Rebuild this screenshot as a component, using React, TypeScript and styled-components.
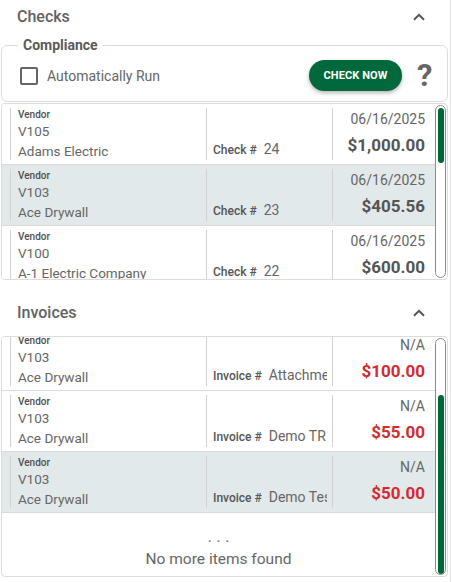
import React from "react";
import styled, { createGlobalStyle } from "styled-components";

const GlobalStyle = createGlobalStyle`
  html, body { margin: 0; padding: 0; background: #fff; }
  body { font-family: Roboto, "Noto Sans", "Liberation Sans", sans-serif; color: #666; }
  * { box-sizing: border-box; }
`;

const Page = styled.div`
  width: 451px;
  min-height: 582px;
  padding: 0 2px 0 1px;
  border-right: 1px solid #e2e2e2;
  display: flex;
  flex-direction: column;
`;

const SectionHeader = styled.div<{ $spaced?: boolean }>`
  height: 33px;
  margin-top: ${(p) => (p.$spaced ? "16px" : "0")};
  padding: 0 23px 0 16px;
  display: flex;
  align-items: center;
  justify-content: space-between;
`;

const Title = styled.h2`
  margin: 0;
  font-size: 16px;
  font-weight: 500;
  color: #626262;
  line-height: 20px;
`;

const Chevron = () => (
  <svg width="12" height="8" viewBox="0 0 12 8" aria-hidden="true">
    <path d="M1 6.8 L6 1.8 L11 6.8" fill="none" stroke="#555" strokeWidth="2" />
  </svg>
);

const Fieldset = styled.fieldset`
  margin: 4px 0 0 0;
  padding: 0 16px 3px 17px;
  border: 1px solid #dcdcdc;
  border-radius: 6px;
  min-width: 0;
`;

const Legend = styled.legend`
  padding: 0 5px;
  margin-left: -1px;
  font-size: 14px;
  font-weight: 700;
  line-height: 16px;
  color: #5a5a5a;
`;

const ComplianceRow = styled.div`
  height: 45px;
  display: flex;
  align-items: center;
`;

const CheckLabel = styled.label`
  display: flex;
  align-items: center;
  gap: 9px;
  font-size: 14px;
  color: #666;
  flex: 1;
  padding-left: 1px;
`;

const CheckBox = styled.input`
  appearance: none;
  margin: 0;
  width: 18px;
  height: 18px;
  border: 2px solid #666;
  border-radius: 2px;
  background: #fff;
`;

const CheckNowButton = styled.button`
  width: 93px;
  height: 31px;
  border: none;
  border-radius: 16px;
  background: #00693b;
  color: #fff;
  font-family: Roboto, "Liberation Sans", sans-serif;
  font-size: 11px;
  font-weight: 700;
  letter-spacing: 0.1px;
  box-shadow: 0 2px 4px rgba(0, 0, 0, 0.3);
  padding: 0;
`;

const HelpMark = styled.span`
  margin-left: 15px;
  width: 14px;
  font-size: 31px;
  font-weight: 700;
  color: #666;
  line-height: 31px;
  text-align: center;
`;

const ListBox = styled.div<{ $height: number; $gap: number }>`
  height: ${(p) => p.$height}px;
  margin-top: ${(p) => p.$gap}px;
  border: 1px solid #dcdcdc;
  border-radius: 4px;
  display: flex;
  overflow: hidden;
`;

const Viewport = styled.div`
  flex: 1;
  overflow: hidden;
`;

const Rows = styled.div<{ $scroll: number }>`
  margin-top: ${(p) => -p.$scroll}px;
`;

const Row = styled.div<{ $selected?: boolean }>`
  height: 61px;
  padding: 4px 0 4px 8px;
  border-bottom: 1px solid #dadada;
  background: ${(p) => (p.$selected ? "#e2e9ea" : "#fff")};
  display: flex;
`;

const Cell = styled.div`
  border-left: 1px solid #d2d2d2;
  height: 52px;
  display: flex;
  flex-direction: column;
  overflow: hidden;
`;

const VendorCell = styled(Cell)`
  width: 196px;
  padding-left: 7px;
`;

const RefCell = styled(Cell)`
  width: 126px;
  padding: 0 5px 0 6px;
  justify-content: flex-end;
`;

const AmountCell = styled(Cell)`
  flex: 1;
  padding-right: 10px;
  align-items: flex-end;
`;

const SmallLabel = styled.div`
  font-size: 10px;
  font-weight: 500;
  line-height: 13px;
  color: #4f4f4f;
`;

const Line = styled.div`
  font-size: 13.5px;
  line-height: 20px;
  color: #666;
  white-space: nowrap;
`;

const RefLine = styled.div`
  line-height: 20px;
  white-space: nowrap;
  overflow: hidden;
  font-size: 14px;
  color: #666;
`;

const RefKey = styled.span`
  font-size: 12px;
  font-weight: 500;
  color: #555;
  margin-right: 7px;
`;

const DateText = styled.div`
  font-size: 14px;
  line-height: 22px;
  color: #666;
`;

const Amount = styled.div<{ $due?: boolean }>`
  font-size: 17px;
  font-weight: 700;
  line-height: 30px;
  color: ${(p) => (p.$due ? "#d52b2f" : "#555")};
`;

const ScrollTrack = styled.div`
  width: 11px;
  margin: 1px 1px 1px 0;
  border: 1px solid #8a8a8a;
  border-radius: 6px;
  background: #fff;
  display: flex;
  flex-direction: column;
  align-items: center;
`;

const ScrollThumb = styled.div<{ $top: number; $size: number }>`
  width: 6px;
  margin-top: ${(p) => p.$top}px;
  height: ${(p) => p.$size}px;
  border-radius: 3px;
  background: #006837;
`;

const Footer = styled.div`
  padding-top: 16px;
  display: flex;
  flex-direction: column;
  align-items: center;
  color: #666;
`;

const Dots = styled.div`
  font-size: 17px;
  line-height: 14px;
  color: #777;
`;

const EndText = styled.div`
  font-size: 15.5px;
  line-height: 22px;
  margin-top: 5px;
`;

type Item = {
  code: string;
  name: string;
  refKey: string;
  refValue: string;
  top: string;
  amount: string;
  selected?: boolean;
};

const checks: Item[] = [
  { code: "V105", name: "Adams Electric", refKey: "Check #", refValue: "24", top: "06/16/2025", amount: "$1,000.00" },
  { code: "V103", name: "Ace Drywall", refKey: "Check #", refValue: "23", top: "06/16/2025", amount: "$405.56", selected: true },
  { code: "V100", name: "A-1 Electric Company", refKey: "Check #", refValue: "22", top: "06/16/2025", amount: "$600.00" },
];

const invoices: Item[] = [
  { code: "V103", name: "Ace Drywall", refKey: "Invoice #", refValue: "Attachment Test", top: "N/A", amount: "$100.00" },
  { code: "V103", name: "Ace Drywall", refKey: "Invoice #", refValue: "Demo TR Invoice", top: "N/A", amount: "$55.00" },
  { code: "V103", name: "Ace Drywall", refKey: "Invoice #", refValue: "Demo Test Invoice", top: "N/A", amount: "$50.00", selected: true },
];

const ItemRow = ({ item, due }: { item: Item; due?: boolean }) => (
  <Row $selected={item.selected}>
    <VendorCell>
      <SmallLabel>Vendor</SmallLabel>
      <Line>{item.code}</Line>
      <Line>{item.name}</Line>
    </VendorCell>
    <RefCell>
      <RefLine>
        <RefKey>{item.refKey}</RefKey>
        {item.refValue}
      </RefLine>
    </RefCell>
    <AmountCell>
      <DateText>{item.top}</DateText>
      <Amount $due={due}>{item.amount}</Amount>
    </AmountCell>
  </Row>
);

export default function App() {
  return (
    <>
      <GlobalStyle />
      <Page>
        <SectionHeader>
          <Title>Checks</Title>
          <Chevron />
        </SectionHeader>
        <Fieldset>
          <Legend>Compliance</Legend>
          <ComplianceRow>
            <CheckLabel>
              <CheckBox type="checkbox" />
              Automatically Run
            </CheckLabel>
            <CheckNowButton>CHECK NOW</CheckNowButton>
            <HelpMark>?</HelpMark>
          </ComplianceRow>
        </Fieldset>
        <ListBox $height={177} $gap={1}>
          <Viewport>
            <Rows $scroll={0}>
              {checks.map((c, i) => (
                <ItemRow key={i} item={c} />
              ))}
            </Rows>
          </Viewport>
          <ScrollTrack>
            <ScrollThumb $top={2} $size={55} />
          </ScrollTrack>
        </ListBox>

        <SectionHeader $spaced>
          <Title>Invoices</Title>
          <Chevron />
        </SectionHeader>
        <ListBox $height={241} $gap={7}>
          <Viewport>
            <Rows $scroll={7}>
              {invoices.map((c, i) => (
                <ItemRow key={i} item={c} due />
              ))}
              <Footer>
                <Dots>. . .</Dots>
                <EndText>No more items found</EndText>
              </Footer>
            </Rows>
          </Viewport>
          <ScrollTrack>
            <ScrollThumb $top={56} $size={180} />
          </ScrollTrack>
        </ListBox>
      </Page>
    </>
  );
}
